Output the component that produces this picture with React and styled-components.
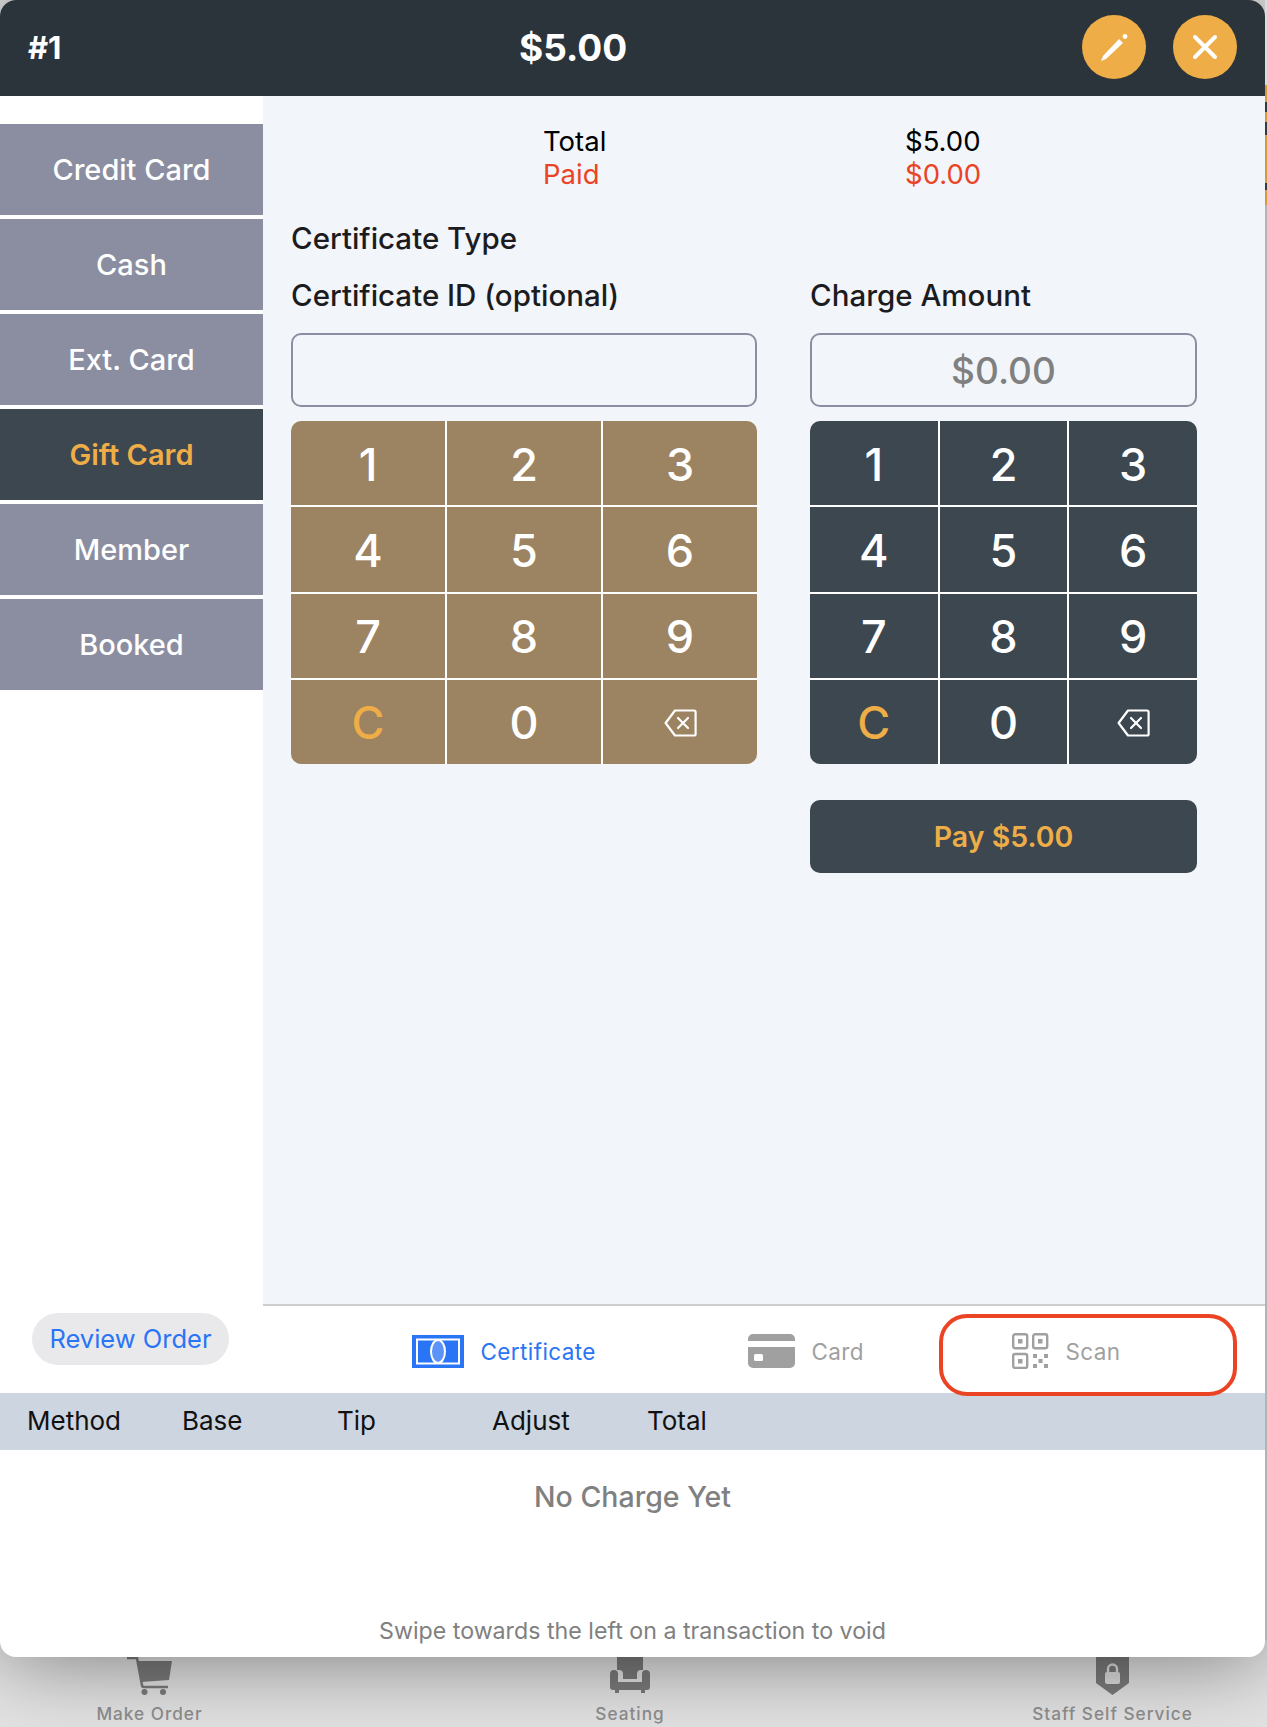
import styled, { createGlobalStyle } from "styled-components"

const GlobalStyle = createGlobalStyle`
  html, body {
    margin: 0;
    padding: 0;
    background: #e4e4e4;
    font-family: "Inter", "Liberation Sans", sans-serif;
  }
  * {
    box-sizing: border-box;
  }
`

const Page = styled.div`
  position: relative;
  width: 1267px;
  height: 1727px;
  display: flex;
  flex-direction: column;
  overflow: hidden;
  background: #e4e4e4;
`

// the page behind the modal peeks out 2px on the right
const BehindEdge = styled.div`
  position: absolute;
  top: 0;
  right: 0;
  width: 2px;
  height: 1640px;
  z-index: 3;
  background: linear-gradient(
    to bottom,
    #dcdcdc 0 85px,
    #d49a3e 85px 102px,
    #333b42 102px 112px,
    #d49a3e 112px 122px,
    #333b42 122px 135px,
    #d49a3e 135px 183px,
    #333b42 183px 190px,
    #d49a3e 190px 205px,
    #b4b4b4 205px
  );
`

const Modal = styled.div`
  position: relative;
  z-index: 2;
  width: 1265px;
  height: 1657px;
  flex: none;
  display: flex;
  flex-direction: column;
  background: #fff;
  border-radius: 16px;
  box-shadow: 0 0 90px rgba(0, 0, 0, 0.5);
  overflow: hidden;
`

const Header = styled.header`
  height: 96px;
  flex: none;
  display: grid;
  grid-template-columns: 491px 1fr auto;
  align-items: center;
  padding: 0 28px 2px;
  background: #2c343b;
  color: #fff;
  font-weight: 700;
`

const OrderNo = styled.div`
  font-size: 31px;
`

const HeaderAmount = styled.div`
  font-size: 37px;
`

const HeaderActions = styled.div`
  display: flex;
  gap: 27px;
`

const RoundButton = styled.button`
  width: 64px;
  height: 64px;
  padding: 0;
  border: none;
  border-radius: 50%;
  background: #eead47;
  display: flex;
`

const Content = styled.div`
  height: 1297px;
  flex: none;
  display: flex;
`

const Sidebar = styled.nav`
  width: 263px;
  flex: none;
  display: flex;
  flex-direction: column;
  gap: 4px;
  padding-top: 28px;
`

const MethodButton = styled.div`
  height: 91px;
  flex: none;
  display: flex;
  align-items: center;
  justify-content: center;
  background: ${(p) => (p.$active ? "#3c4750" : "#8b8ea0")};
  color: ${(p) => (p.$active ? "#eead47" : "#fff")};
  font-size: 29px;
  font-weight: ${(p) => (p.$active ? 600 : 500)};
`

const ReviewButton = styled.div`
  margin: auto 34px 28px 32px;
  height: 52px;
  flex: none;
  display: flex;
  align-items: center;
  justify-content: center;
  padding-bottom: 2px;
  border-radius: 26px;
  background: #e9e9eb;
  color: #2a75f5;
  font-size: 25.5px;
`

const Column = styled.div`
  flex: 1;
  min-width: 0;
  display: flex;
  flex-direction: column;
`

const Main = styled.main`
  flex: 1;
  min-height: 0;
  padding: 29px 0 0 28px;
  background: #f2f5fa;
  border-bottom: 2px solid #cfcfd2;
`

const Summary = styled.div`
  display: grid;
  grid-template-columns: 362px auto;
  padding-left: 252px;
  font-size: 27.5px;
  line-height: 33px;
  color: ${(p) => p.$color};
`

const FieldLabel = styled.div`
  font-size: 29.5px;
  font-weight: 500;
  line-height: 34px;
  color: #1c1c1e;
`

const TypeLabel = styled(FieldLabel)`
  margin: 30px 0 23px;
`

const Forms = styled.div`
  display: flex;
  gap: 53px;
`

const FormColumn = styled.div`
  width: ${(p) => p.$width}px;
  flex: none;
`

const InputBox = styled.div`
  height: 74px;
  margin: 21px 0 14px;
  display: flex;
  align-items: center;
  justify-content: center;
  border: 2px solid #8b8ea0;
  border-radius: 10px;
  color: #808080;
  font-size: 37px;
  font-weight: 500;
`

const Keypad = styled.div`
  height: 343px;
  display: grid;
  grid-template-columns: repeat(3, 1fr);
  grid-template-rows: repeat(4, 1fr);
  gap: 2px;
  border-radius: 10px;
  overflow: hidden;
  background: #fff;
`

const Key = styled.div`
  display: flex;
  align-items: center;
  justify-content: center;
  padding-top: 2px;
  background: ${(p) => p.$bg};
  color: ${(p) => (p.$accent ? "#eead47" : "#fff")};
  font-size: 45px;
  font-weight: 500;
`

const PayButton = styled.div`
  height: 73px;
  margin-top: 36px;
  display: flex;
  align-items: center;
  justify-content: center;
  border-radius: 10px;
  background: #3c4750;
  color: #eead47;
  font-size: 28.5px;
  font-weight: 600;
`

const TabRow = styled.div`
  height: 87px;
  flex: none;
  padding-left: 149px;
  display: flex;
  align-items: flex-start;
`

const Tab = styled.div`
  width: ${(p) => p.$width}px;
  flex: none;
  height: 36px;
  margin-top: 27px;
  display: flex;
  align-items: center;
  gap: 16.5px;
  color: ${(p) => (p.$active ? "#2a75f5" : "#a0a0a0")};
  font-size: 22.5px;
  letter-spacing: 0.4px;
`

const ScanHighlight = styled.div`
  position: absolute;
  left: 939px;
  top: 1314px;
  width: 298px;
  height: 82px;
  border: 4px solid #ea4425;
  border-radius: 28px;
  z-index: 3;
`

const TableHead = styled.div`
  height: 57px;
  flex: none;
  display: grid;
  grid-template-columns: repeat(5, 155px);
  align-items: center;
  padding: 0 0 2px 27px;
  background: #cdd5e0;
  color: #111;
  font-size: 26px;
`

const TableBody = styled.div`
  flex: 1;
  min-height: 0;
  display: flex;
  flex-direction: column;
  align-items: center;
  color: #808080;
`

const EmptyText = styled.div`
  margin-top: 28px;
  font-size: 28.5px;
  font-weight: 500;
  line-height: 38px;
`

const Hint = styled.div`
  margin-top: auto;
  margin-bottom: 10px;
  font-size: 23.2px;
  line-height: 32px;
`

const TabBar = styled.footer`
  flex: 1;
  position: relative;
  display: flex;
  overflow: hidden;
`

const BarItem = styled.div`
  width: ${(p) => p.$width}px;
  flex: none;
  display: flex;
  flex-direction: column;
  align-items: center;
  color: #8f8f8f;
  font-size: 17.2px;
  font-weight: 500;
  letter-spacing: 1px;
  line-height: 24px;
`

const BarIcon = styled.svg`
  width: ${(p) => p.$w}px;
  height: 38px;
  margin-bottom: 7px;
`

const PencilIcon = () => (
  <svg width="64" height="64" viewBox="0 0 64 64">
    <path d="M19 46l2-5 16-17 4 4-17 16z" fill="#fff" />
    <circle cx="43" cy="21.5" r="2.4" fill="#fff" />
  </svg>
)

const CloseIcon = () => (
  <svg width="64" height="64" viewBox="0 0 64 64">
    <path d="M22 22l20 20M42 22L22 42" stroke="#fff" strokeWidth="4" strokeLinecap="round" />
  </svg>
)

const BackspaceIcon = () => (
  <svg width="33" height="28" viewBox="0 0 33 28" fill="none" stroke="#fff" strokeWidth="2.2" strokeLinejoin="round">
    <path d="M11 1.5h19a1.6 1.6 0 0 1 1.6 1.6v21.8a1.6 1.6 0 0 1-1.6 1.6H11L1.6 14z" />
    <path d="M14 9l10 10M24 9L14 19" strokeLinecap="round" />
  </svg>
)

const CertificateIcon = () => (
  <svg width="52" height="33" viewBox="0 0 52 33">
    <rect width="52" height="33" fill="#2a75f5" />
    <rect x="5" y="4.5" width="42" height="24" fill="none" stroke="#fff" strokeWidth="2" />
    <ellipse cx="26" cy="16.5" rx="7" ry="11.5" fill="#5b93f7" stroke="#fff" strokeWidth="2" />
  </svg>
)

const CardIcon = () => (
  <svg width="47" height="34" viewBox="0 0 47 34">
    <path d="M5 0h37a5 5 0 0 1 5 5v2H0V5a5 5 0 0 1 5-5zM0 13h47v16a5 5 0 0 1-5 5H5a5 5 0 0 1-5-5z" fill="#a0a0a0" />
    <rect x="6" y="20" width="9" height="7" rx="1.5" fill="#fff" />
  </svg>
)

const QrIcon = () => (
  <svg width="37" height="36" viewBox="0 0 37 36">
    <g fill="none" stroke="#a0a0a0" strokeWidth="2.4">
      <rect x="1.2" y="1.2" width="14" height="14" rx="2" />
      <rect x="21.2" y="1.2" width="14" height="14" rx="2" />
      <rect x="1.2" y="21" width="14" height="14" rx="2" />
    </g>
    <g fill="#a0a0a0">
      <rect x="6" y="6" width="4.5" height="4.5" />
      <rect x="26" y="6" width="4.5" height="4.5" />
      <rect x="6" y="26" width="4.5" height="4.5" />
      <rect x="21" y="21" width="4" height="4" />
      <rect x="32" y="21" width="4" height="4" />
      <rect x="26.5" y="26" width="4" height="4" />
      <rect x="21" y="31" width="4" height="4" />
      <rect x="32" y="31" width="4" height="4" />
    </g>
  </svg>
)

const CartIcon = () => (
  <BarIcon $w={46} viewBox="0 0 46 38">
    <path d="M0 1h10l5 27a2 2 0 0 0 2 2h24" fill="none" stroke="#7c7c7c" strokeWidth="2.6" />
    <path d="M11 4h34l-3 19-28 2z" fill="#7c7c7c" />
    <circle cx="17.5" cy="35" r="3" fill="#7c7c7c" />
    <circle cx="36" cy="35" r="3" fill="#7c7c7c" />
  </BarIcon>
)

const SofaIcon = () => (
  <BarIcon $w={40} viewBox="0 0 40 38">
    <path d="M7 0h26v13h-2a4 4 0 0 0-4 4v5H13v-5a4 4 0 0 0-4-4H7z" fill="#7c7c7c" />
    <path d="M0 17a4 4 0 0 1 8 0v8h24v-8a4 4 0 0 1 8 0v13a3 3 0 0 1-3 3h-2v3h-4v-3H9v3H5v-3H3a3 3 0 0 1-3-3z" fill="#7c7c7c" />
  </BarIcon>
)

const LockIcon = () => (
  <BarIcon $w={33} viewBox="0 0 33 38">
    <path d="M0 0h33v26L16.5 38 0 26z" fill="#7c7c7c" />
    <rect x="9" y="15" width="15" height="12" rx="2" fill="#dedede" />
    <path d="M12 16v-4a4.5 4.5 0 0 1 9 0v4" fill="none" stroke="#dedede" strokeWidth="2.4" />
  </BarIcon>
)

const keys = ["1", "2", "3", "4", "5", "6", "7", "8", "9", "C", "0", "back"]

const NumberPad = ({ bg }) => (
  <Keypad>
    {keys.map((k) => (
      <Key key={k} $bg={bg} $accent={k === "C"}>
        {k === "back" ? <BackspaceIcon /> : k}
      </Key>
    ))}
  </Keypad>
)

const methods = ["Credit Card", "Cash", "Ext. Card", "Gift Card", "Member", "Booked"]

export default function App() {
  return (
    <Page>
      <GlobalStyle />
      <BehindEdge />
      <Modal>
        <Header>
          <OrderNo>#1</OrderNo>
          <HeaderAmount>$5.00</HeaderAmount>
          <HeaderActions>
            <RoundButton><PencilIcon /></RoundButton>
            <RoundButton><CloseIcon /></RoundButton>
          </HeaderActions>
        </Header>
        <Content>
          <Sidebar>
            {methods.map((m) => (
              <MethodButton key={m} $active={m === "Gift Card"}>{m}</MethodButton>
            ))}
            <ReviewButton>Review Order</ReviewButton>
          </Sidebar>
          <Column>
            <Main>
              <Summary $color="#000">
                <div>Total</div>
                <div>$5.00</div>
              </Summary>
              <Summary $color="#ea4425">
                <div>Paid</div>
                <div>$0.00</div>
              </Summary>
              <TypeLabel>Certificate Type</TypeLabel>
              <Forms>
                <FormColumn $width={466}>
                  <FieldLabel>Certificate ID (optional)</FieldLabel>
                  <InputBox />
                  <NumberPad bg="#9c8361" />
                </FormColumn>
                <FormColumn $width={387}>
                  <FieldLabel>Charge Amount</FieldLabel>
                  <InputBox>$0.00</InputBox>
                  <NumberPad bg="#3c4750" />
                  <PayButton>Pay $5.00</PayButton>
                </FormColumn>
              </Forms>
            </Main>
            <TabRow>
              <Tab $width={336} $active><CertificateIcon />Certificate</Tab>
              <Tab $width={264}><CardIcon />Card</Tab>
              <Tab $width={200}><QrIcon />Scan</Tab>
            </TabRow>
          </Column>
        </Content>
        <TableHead>
          <div>Method</div>
          <div>Base</div>
          <div>Tip</div>
          <div>Adjust</div>
          <div>Total</div>
        </TableHead>
        <TableBody>
          <EmptyText>No Charge Yet</EmptyText>
          <Hint>Swipe towards the left on a transaction to void</Hint>
        </TableBody>
        <ScanHighlight />
      </Modal>
      <TabBar>
        <BarItem $width={299}><CartIcon />Make Order</BarItem>
        <BarItem $width={662}><SofaIcon />Seating</BarItem>
        <BarItem $width={303}><LockIcon />Staff Self Service</BarItem>
      </TabBar>
    </Page>
  )
}
